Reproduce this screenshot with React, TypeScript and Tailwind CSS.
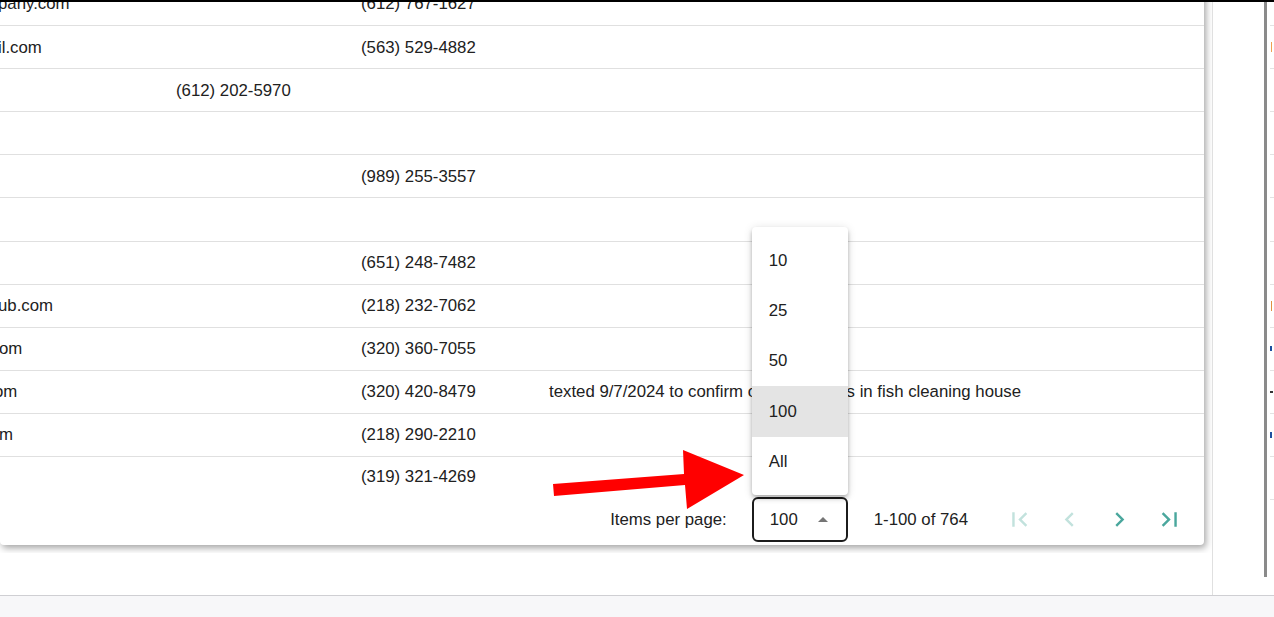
import React from "react";

type Row = { email?: string; emailShift?: string; alt?: string; phone?: string; note?: string };

const rows: Row[] = [
  { email: "pany.com", emailShift: "-ml-[2px]", phone: "(612) 767-1627" },
  { email: "il.com", emailShift: "-ml-[2px]", phone: "(563) 529-4882" },
  { alt: "(612) 202-5970" },
  {},
  { phone: "(989) 255-3557" },
  {},
  { phone: "(651) 248-7482" },
  { email: "ub.com", emailShift: "-ml-[2px]", phone: "(218) 232-7062" },
  { email: "om", emailShift: "-ml-[1px]", phone: "(320) 360-7055" },
  { email: "om", emailShift: "-ml-[6px]", phone: "(320) 420-8479", note: "texted 9/7/2024 to confirm one of her rigs in fish cleaning house" },
  { email: "m", emailShift: "-ml-[1px]", phone: "(218) 290-2210" },
  { phone: "(319) 321-4269" },
];

const FirstPage = ({ c }: { c: string }) => (
  <svg width="29" height="29" viewBox="0 0 24 24" fill={c}>
    <path d="M18.41 16.59L13.82 12l4.59-4.59L17 6l-6 6 6 6zM6 6h2v12H6z" />
  </svg>
);
const Prev = ({ c }: { c: string }) => (
  <svg width="29" height="29" viewBox="0 0 24 24" fill={c}>
    <path d="M15.41 7.41L14 6l-6 6 6 6 1.41-1.41L10.83 12z" />
  </svg>
);
const Next = ({ c }: { c: string }) => (
  <svg width="29" height="29" viewBox="0 0 24 24" fill={c}>
    <path d="M10 6L8.59 7.41 13.17 12l-4.58 4.59L10 18l6-6z" />
  </svg>
);
const LastPage = ({ c }: { c: string }) => (
  <svg width="29" height="29" viewBox="0 0 24 24" fill={c}>
    <path d="M5.59 7.41L10.18 12l-4.59 4.59L7 18l6-6-6-6zM16 6h2v12h-2z" />
  </svg>
);

export default function App() {
  const disabled = "#c2e2dd";
  const enabled = "#4aa79d";
  return (
    <div className="relative w-[1274px] h-[617px] overflow-hidden bg-white flex flex-col border-t-2 border-black font-['Liberation_Sans',Arial,sans-serif] text-[16.8px] text-[#212121]">
      <div className="flex h-[594px] border-b border-[#cfcfd3]">
        {/* main column */}
        <div className="w-[1213px] border-r border-[#e0e0e0] flex flex-col">
          <div className="h-[551px] overflow-hidden">
            <div className="w-[1204px] -mt-[19px] bg-white rounded-b-[4px] shadow-[2px_3px_7px_rgba(0,0,0,0.36)]">
              {rows.map((r, i) => (
                <div
                  key={i}
                  className={
                    i < rows.length - 1
                      ? "grid grid-cols-[176px_185px_188px_1fr] items-center h-[43.1px] border-b border-[#e0e0e0] whitespace-nowrap"
                      : "grid grid-cols-[176px_185px_188px_1fr] items-center h-[40px] whitespace-nowrap"
                  }
                >
                  <div className={r.emailShift ?? ""}>{r.email ?? ""}</div>
                  <div>{r.alt ?? ""}</div>
                  <div>{r.phone ?? ""}</div>
                  <div>{r.note ?? ""}</div>
                </div>
              ))}
              {/* paginator */}
              <div className="h-[48px] flex justify-end items-start pr-[10px]">
                <div className="h-[45px] flex items-center">Items per page:</div>
                <div className="relative ml-[25px] w-[96px] h-[45px] border-2 border-[#1c1c1c] rounded-[6px] flex items-center pl-[16px] pr-[18px]">
                  <span>100</span>
                  <span className="ml-auto w-0 h-0 border-x-[5px] border-x-transparent border-b-[5px] border-b-[#757575]" />
                  <div className="absolute -left-[2px] bottom-[calc(100%+4px)] w-[96px] bg-white rounded-[4px] py-[8px] shadow-[0_2px_4px_-1px_rgba(0,0,0,0.2),0_4px_5px_0_rgba(0,0,0,0.14),0_1px_10px_0_rgba(0,0,0,0.12)]">
                    {["10", "25", "50", "100", "All"].map((o) => (
                      <div
                        key={o}
                        className={
                          o === "100"
                            ? "h-[50.4px] flex items-center pl-[17px] bg-[#e4e4e4]"
                            : "h-[50.4px] flex items-center pl-[17px]"
                        }
                      >
                        {o}
                      </div>
                    ))}
                  </div>
                </div>
                <div className="h-[45px] flex items-center ml-[26px] mr-[26px]">1-100 of 764</div>
                <div className="h-[45px] flex items-center">
                  <div className="w-[50px] flex justify-center"><FirstPage c={disabled} /></div>
                  <div className="w-[50px] flex justify-center"><Prev c={disabled} /></div>
                  <div className="w-[50px] flex justify-center"><Next c={enabled} /></div>
                  <div className="w-[50px] flex justify-center"><LastPage c={enabled} /></div>
                </div>
              </div>
            </div>
          </div>
          <div className="flex-1 bg-white" />
        </div>
        {/* right strip */}
        <div className="flex-1 flex">
          <div className="w-[51px]" />
          <div className="w-[3px] h-[575px] bg-[#8a8a8a]" />
          <div className="w-[3px]" />
          <div className="flex-1 flex flex-col -mt-[19px]">
            {rows.map((_, i) => (
              <div key={i} className="h-[43.1px] border-b border-[#e3e3e3] flex items-center">
                {i === 1 && <div className="w-[1px] h-[10px] bg-[#f0a050] ml-[1px]" />}
                {i === 7 && <div className="w-[1px] h-[10px] bg-[#e09040] ml-[1px]" />}
                {i === 8 && <div className="w-[2px] h-[5px] bg-[#1a4fa0]" />}
                {i === 9 && <div className="w-[3px] h-[2px] bg-[#333]" />}
                {i === 10 && <div className="w-[2px] h-[6px] bg-[#2050a0]" />}
              </div>
            ))}
          </div>
        </div>
      </div>
      <div className="flex-1 bg-[#f7f7f9]" />
      {/* red annotation arrow */}
      <svg className="absolute left-0 top-0 pointer-events-none" width="1274" height="617">
        <polygon
          points="553,482 684,472 683,448 744,473 687,507 685,483 554,494"
          fill="#ff0000"
        />
      </svg>
    </div>
  );
}
